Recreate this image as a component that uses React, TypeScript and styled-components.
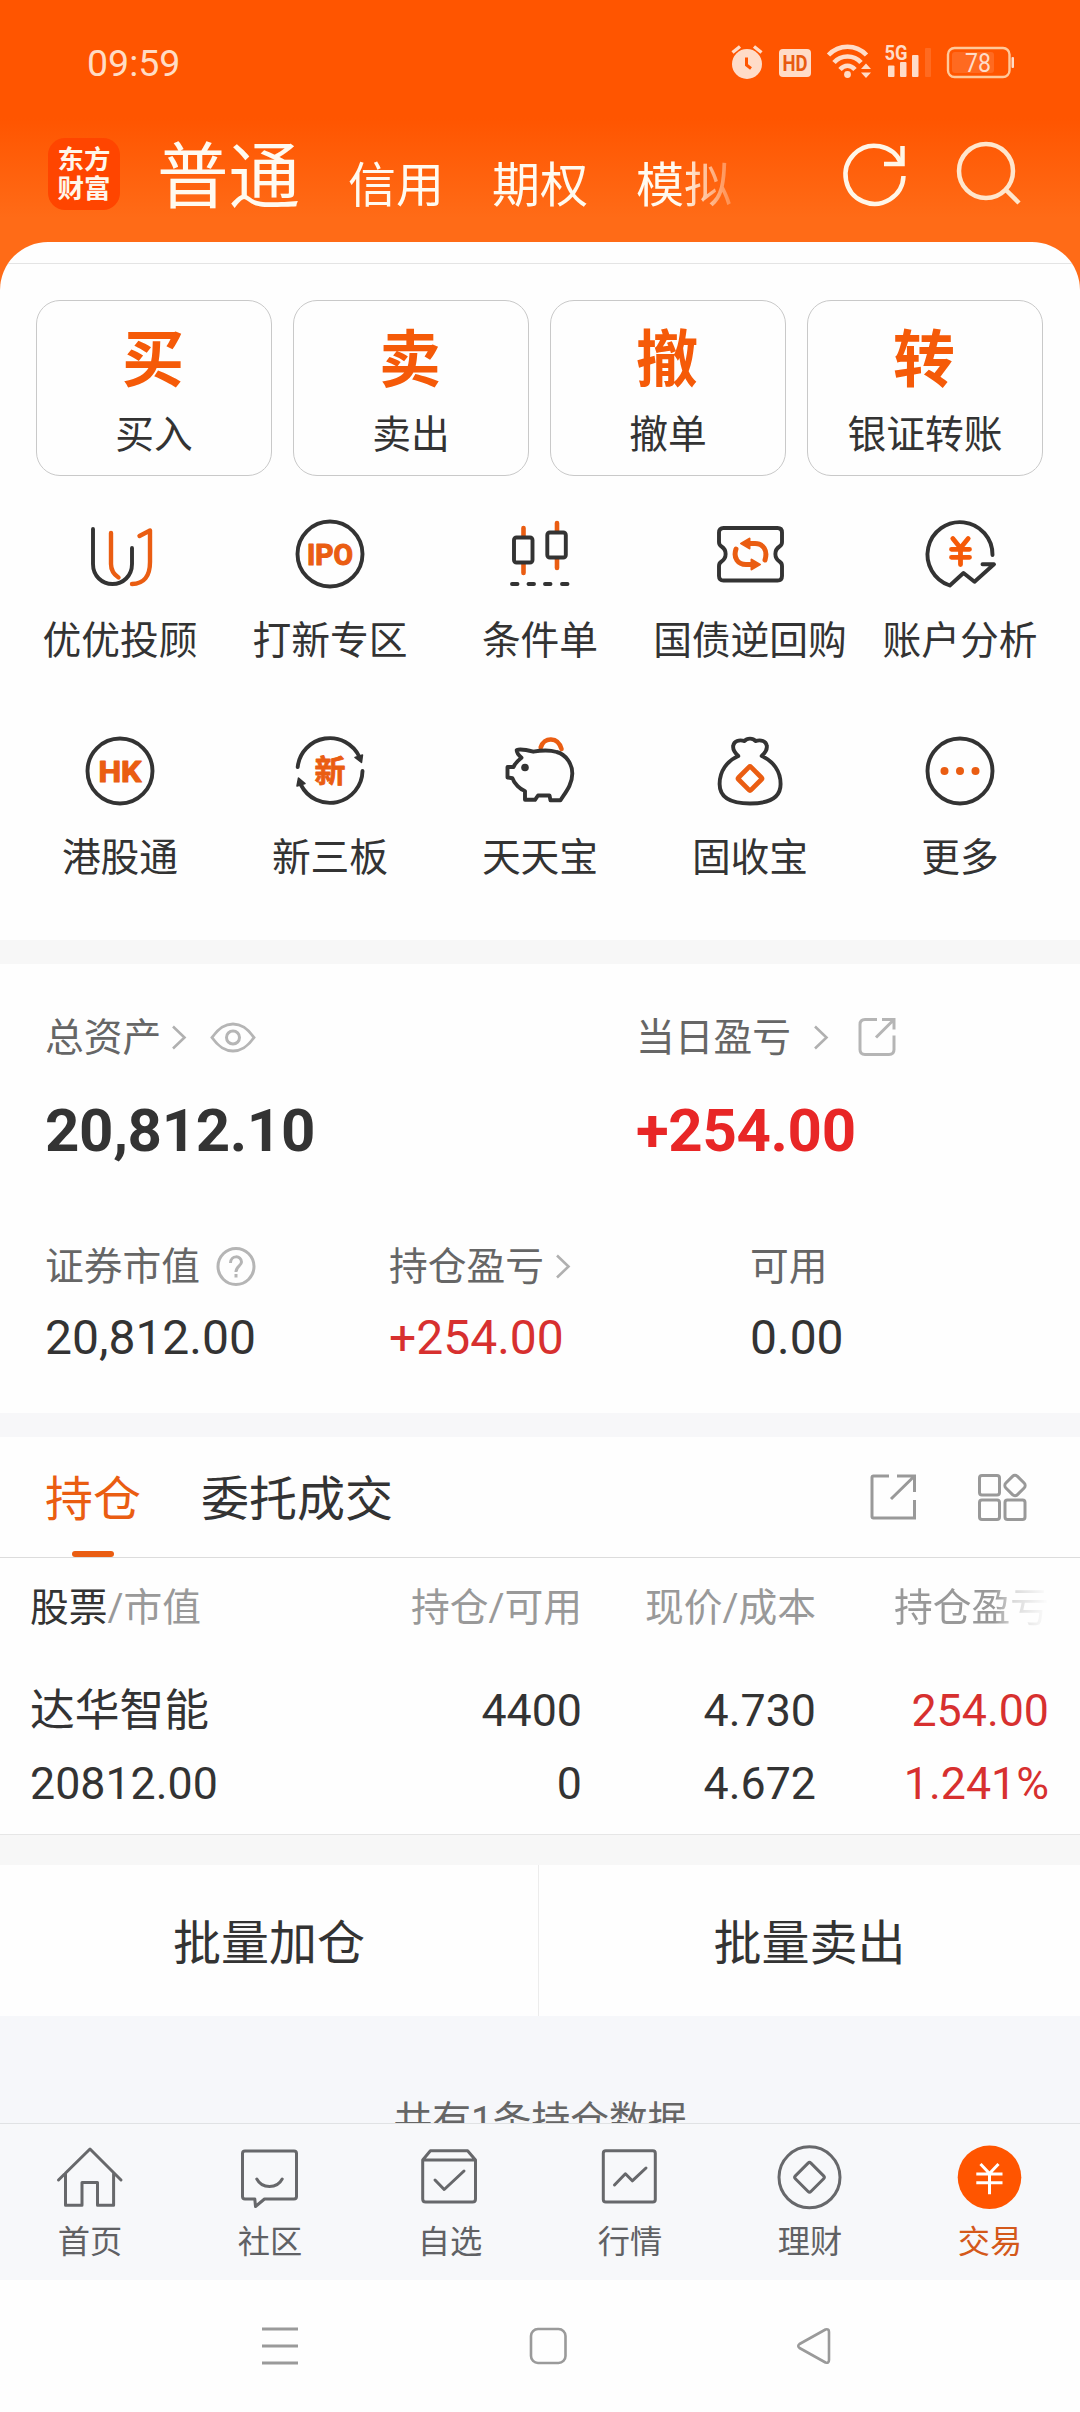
import React from "react";
import styled, { createGlobalStyle } from "styled-components";

const INK = "#333333";
const ORANGE = "#ea5d12";
const RED = "#d7302f";

const GlobalStyle = createGlobalStyle`
  * { box-sizing: border-box; }
  body {
    margin: 0;
    background: #fefefe;
    color: ${INK};
    font-family: Roboto, "Noto Sans CJK SC", sans-serif;
  }
  svg { display: block; flex: none; overflow: visible; }
`;

const Screen = styled.div`
  width: 1080px;
  height: 2412px;
  display: flex;
  flex-direction: column;
  overflow: hidden;
  background: #fefefe;
`;

/* ---------- header ---------- */

const Header = styled.header`
  height: 292px;
  flex: none;
  background: linear-gradient(#ff5500 0, #ff5500 118px, #ff6b17 218px, #ff6b17 100%);
`;

const StatusBar = styled.div`
  height: 124px;
  padding: 0 64px 0 87px;
  display: flex;
  align-items: center;
  justify-content: space-between;
`;

const Clock = styled.span`
  font-size: 37.5px;
  line-height: 44px;
  padding-top: 2px;
  color: #ffdcc4;
`;

const StatusIcons = styled.svg`
  width: 288px;
  height: 44px;
`;

const TitleBar = styled.div`
  height: 118px;
  display: flex;
  align-items: center;
  padding: 0 59px 18px 48px;
`;

const Logo = styled.div`
  width: 72px;
  height: 72px;
  border-radius: 17px;
  background: #ff4500;
  color: #fff6ea;
  font-size: 26.5px;
  font-weight: 700;
  line-height: 29px;
  text-align: center;
  padding-top: 7px;
`;

const AccountTabs = styled.nav`
  width: 612px;
  display: flex;
  align-items: baseline;
  padding: 16px 0 0 37px;
  gap: 48px;
  mask-image: linear-gradient(90deg, #000 0, #000 560px, transparent 630px);
`;

const AccountTab = styled.span<{ $active?: boolean }>`
  font-size: ${(p) => (p.$active ? 71.5 : 48)}px;
  line-height: 84px;
  white-space: nowrap;
  color: #fffaf0;
`;

const TitleActions = styled.div`
  margin-left: auto;
  display: flex;
  gap: 47px;
`;

/* ---------- sheet ---------- */

const Sheet = styled.main`
  margin-top: -50px;
  height: 1881px;
  flex: none;
  background: #fefefe;
  border-radius: 48px 48px 0 0;
  overflow: hidden;
  display: flex;
  flex-direction: column;
`;

const SheetTop = styled.div`
  height: 22px;
  flex: none;
  border-bottom: 1px solid #e4e4e4;
`;

const CardRow = styled.div`
  display: grid;
  grid-template-columns: repeat(4, 236px);
  gap: 21px;
  padding: 36px 36px 0;
  flex: none;
`;

const TradeCard = styled.div`
  height: 176px;
  border: 1px solid #c9c9c9;
  border-radius: 24px;
  display: flex;
  flex-direction: column;
  align-items: center;
  padding-top: 20px;
`;

const TradeGlyph = styled.span`
  font-size: 62px;
  font-weight: 700;
  line-height: 80px;
  padding-right: 2px;
  color: #f55a08;
`;

const TradeLabel = styled.span`
  font-size: 38.75px;
  line-height: 44px;
  margin-top: 12px;
`;

const ShortcutGrid = styled.div`
  height: 464px;
  flex: none;
  padding: 42px 15px 0;
  display: grid;
  grid-template-columns: repeat(5, 210px);
  grid-auto-rows: 217px;
`;

const Shortcut = styled.div`
  display: flex;
  flex-direction: column;
  align-items: center;
  gap: 27px;
  font-size: 38.75px;
  line-height: 48px;
  white-space: nowrap;
`;

const Band = styled.div<{ $h: number; $c?: string }>`
  height: ${(p) => p.$h}px;
  flex: none;
  background: ${(p) => p.$c || "#f7f7f7"};
`;

/* ---------- assets ---------- */

const Assets = styled.section`
  height: 449px;
  flex: none;
  padding: 48px 45px 0;
`;

const Summary = styled.div<{ $cols: string }>`
  display: grid;
  grid-template-columns: ${(p) => p.$cols};
`;

const FieldLabel = styled.div`
  height: 52px;
  display: flex;
  align-items: center;
  font-size: 38.75px;
  line-height: 52px;
  color: #666;
`;

const IconGap = styled.i<{ $w: number }>`
  width: ${(p) => p.$w}px;
  flex: none;
`;

const Total = styled.div<{ $c?: string }>`
  margin-top: 28px;
  font-size: 60px;
  font-weight: 700;
  line-height: 77px;
  height: 127px;
  letter-spacing: -0.35px;
  color: ${(p) => p.$c || INK};
`;

const Amount = styled.div<{ $c?: string }>`
  margin-top: 15px;
  font-size: 48px;
  line-height: 60px;
  color: ${(p) => p.$c || INK};
`;

/* ---------- positions ---------- */

const TabBar = styled.div`
  height: 121px;
  flex: none;
  padding: 0 53px 0 45px;
  display: flex;
  border-bottom: 1px solid #dcdcdc;
`;

const Tab = styled.div<{ $active?: boolean }>`
  display: flex;
  flex-direction: column;
  align-items: center;
  margin-right: 60px;
  padding-top: 31px;
  font-size: 48px;
  line-height: 64px;
  color: ${(p) => (p.$active ? ORANGE : INK)};
  &::after {
    content: "";
    width: 42px;
    height: 6px;
    margin-top: 19px;
    border-radius: 3px;
    background: ${(p) => (p.$active ? ORANGE : "transparent")};
  }
`;

const TabTools = styled.div`
  margin-left: auto;
  padding-top: 36px;
  display: flex;
  gap: 60px;
`;

const Table = styled.div`
  height: 277px;
  flex: none;
  padding: 22px 31px 0 30px;
  border-bottom: 1px solid #e6e6e6;
`;

const TableRow = styled.div<{ $head?: boolean; $h: number }>`
  display: grid;
  grid-template-columns: 291px 261px 234px 233px;
  height: ${(p) => p.$h}px;
  line-height: ${(p) => p.$h}px;
  font-size: ${(p) => (p.$head ? 38.75 : 44.75)}px;
  color: ${(p) => (p.$head ? "#999" : INK)};
  white-space: nowrap;
`;

const Cell = styled.div<{ $c?: string; $fade?: boolean }>`
  color: ${(p) => p.$c || "inherit"};
  text-align: right;
  &:first-child { text-align: left; }
  ${(p) =>
    p.$fade &&
    "mask-image: linear-gradient(90deg, #000 0, #000 178px, rgba(0,0,0,.35) 198px, transparent 233px);"}
`;

const Dark = styled.span`
  color: ${INK};
`;

const RowSpace = styled.div<{ $h: number }>`
  height: ${(p) => p.$h}px;
`;

const BatchRow = styled.div`
  height: 151px;
  flex: none;
  display: grid;
  grid-template-columns: 539px 541px;
`;

const BatchButton = styled.div`
  font-size: 48px;
  line-height: 157px;
  text-align: center;
  &:first-child { border-right: 1px solid #ececec; }
`;

const Footnote = styled.div`
  height: 107px;
  flex: none;
  padding-top: 81px;
  overflow: hidden;
  background: #f6f7fa;
  color: #666;
  text-align: center;
  font-size: 38.75px;
  line-height: 48px;
`;

/* ---------- bottom bars ---------- */

const NavBar = styled.nav`
  height: 157px;
  flex: none;
  border-top: 1px solid #e0e2e4;
  background: #f7f8fa;
  display: grid;
  grid-template-columns: repeat(6, 180px);
  padding-top: 17px;
`;

const NavItem = styled.div<{ $active?: boolean }>`
  display: flex;
  flex-direction: column;
  align-items: center;
  gap: 8px;
  font-size: 32.25px;
  line-height: 42px;
  color: ${(p) => (p.$active ? "#d4591a" : "#606164")};
`;

const SystemBar = styled.div`
  flex: 1;
  display: flex;
  align-items: flex-start;
  padding: 47px 0 0 261px;
  gap: 230px;
`;

/* ---------- drawings ---------- */

const Art: React.FC<{ children: React.ReactNode; sw?: number; color?: string }> = ({
  children,
  sw = 3.9,
  color = INK,
}) => (
  <svg
    width="72"
    height="72"
    viewBox="0 0 72 72"
    fill="none"
    stroke={color}
    strokeWidth={sw}
    strokeLinecap="round"
    strokeLinejoin="round"
  >
    {children}
  </svg>
);

const Word: React.FC<{ children: string; y: number; size: number; w: number; stroke?: number }> = ({
  children,
  y,
  size,
  w,
  stroke = 1.2,
}) => (
  <text
    x={36}
    y={y}
    fontSize={size}
    fontWeight={700}
    textAnchor="middle"
    textLength={w}
    lengthAdjust="spacingAndGlyphs"
    fill={ORANGE}
    stroke={ORANGE}
    strokeWidth={stroke}
  >
    {children}
  </text>
);

const shortcuts: { label: string; art: React.ReactNode }[] = [
  {
    label: "优优投顾",
    art: (
      <Art>
        <path d="M9 11V46C9 58 18 66 28.500 66S48 58 48 46V30" />
        <path stroke={ORANGE} strokeWidth="4.400" d="M27 15V46C27 52 30 56.500 34.500 59.500M55.500 18L66 12.500V44C66 58 60 66 48 66" />
      </Art>
    ),
  },
  {
    label: "打新专区",
    art: (
      <Art>
        <circle cx="36" cy="36" r="32.500" />
        <Word y={46.5} size={29.5} w={46}>IPO</Word>
      </Art>
    ),
  },
  {
    label: "条件单",
    art: (
      <Art>
        <path stroke={ORANGE} strokeWidth="4.600" d="M19.500 10V18M19.500 46V55M53 5V13M53 41V50" />
        <rect x="10" y="19.500" width="18.500" height="25" rx="2.500" />
        <rect x="43.300" y="14.500" width="18.500" height="25" rx="2.500" />
        <path d="M8 66H13.500M24.500 66H30M41 66H46.500M58 66H63.500" />
      </Art>
    ),
  },
  {
    label: "国债逆回购",
    art: (
      <Art>
        <path d="M9.500 10H63.500Q68 10 68 14.500V24Q68 27 65.500 28.500C60 32 60 40 65.500 43.500Q68 45 68 48V58Q68 62.500 63.500 62.500H9.500Q5 62.500 5 58V48Q5 45 7.500 43.500C13 40 13 32 7.500 28.500Q5 27 5 24V14.500Q5 10 9.500 10Z" />
        <g stroke={ORANGE} strokeWidth="5">
          <path d="M34 25.500H41C49 25.500 54 32 51 42M22 31C19 40 24 46.500 32 46.500H38" />
          <path strokeWidth="2" fill={ORANGE} d="M27 25.500L35.500 20.500V30.500ZM46 46.500L37.500 41.500V51.500Z" />
        </g>
      </Art>
    ),
  },
  {
    label: "账户分析",
    art: (
      <Art>
        <path d="M68.500 37A32.500 32.500 0 1 0 25.800 67.500L39.500 55L50.500 63.700L70 46.300H58.500" />
        <path stroke="#f55a08" strokeWidth="4.800" d="M28.800 20.500L36.500 30L44.200 20.500M27.500 31.300H45.500M27.500 39.300H45.500M36.500 31V46.500" />
      </Art>
    ),
  },
  {
    label: "港股通",
    art: (
      <Art>
        <circle cx="36" cy="36" r="32.500" />
        <Word y={46.5} size={29.5} w={43}>HK</Word>
      </Art>
    ),
  },
  {
    label: "新三板",
    art: (
      <Art>
        <path d="M3.700 32A32.500 32.500 0 0 1 65.500 22M68.500 36A32.500 32.500 0 0 1 7 50" />
        <path fill={INK} strokeWidth="1.500" d="M61 22.500L68.500 20L67.500 27.500ZM4.500 43L3 51L11 48.500Z" />
        <Word y={47} size={31} w={31} stroke={0.8}>新</Word>
      </Art>
    ),
  },
  {
    label: "天天宝",
    art: (
      <Art>
        <path stroke={ORANGE} strokeWidth="4.600" d="M36.700 12.500C40 1.500 54 1.500 57.500 14" />
        <path d="M12.700 15C17 13.500 23 15 29.300 16.700C36 15.500 46 15 52.700 17C62 19.500 68.300 29 68.300 38.500C68.300 50 61 58 56.500 65.300H46.500L45.500 60.500H34L31 64.800H21V56C16 54.500 10.500 49 8.500 43.300L3.500 42.500V32H9.500C11 28 14 25.500 17.500 22.700C15 20.500 12.500 18 12.700 15Z" />
        <circle cx="21" cy="32.500" r="3.800" fill={INK} stroke="none" />
      </Art>
    ),
  },
  {
    label: "固收宝",
    art: (
      <Art>
        <path d="M24.300 21C20 17 18.500 14 19.300 10.500C20 6 25 4.500 30.500 6C33 2.800 39 2.800 41.500 6C47 4.500 52 6 52.700 10.500C53.500 14 52 17 47.700 21C59 26 66.600 36 66.600 49C66.600 62 56 68.500 36 68.500S5.600 62 5.600 49C5.600 36 13 26 24.300 21Z" />
        <rect x="27.200" y="34.700" width="17.600" height="17.600" rx="1.500" transform="rotate(45 36 43.500)" stroke={ORANGE} strokeWidth="4.800" />
      </Art>
    ),
  },
  {
    label: "更多",
    art: (
      <Art>
        <circle cx="36" cy="36" r="32.500" />
        <g fill={ORANGE} stroke="none">
          <circle cx="20.500" cy="36" r="4" />
          <circle cx="36" cy="36" r="4" />
          <circle cx="51.500" cy="36" r="4" />
        </g>
      </Art>
    ),
  },
];

const navItems: { label: string; active?: boolean; art: React.ReactNode }[] = [
  {
    label: "首页",
    art: <path d="M4.500 39L36 8L67 39M11.500 32V64.300H28V41.500H43.500V64.300H59.600V32" />,
  },
  {
    label: "社区",
    art: (
      <path d="M11 10H60Q62.500 10 62.500 12.500V55.500Q62.500 58 60 58H30.500L21.500 65.500L20.800 58H11Q8.500 58 8.500 55.500V12.500Q8.500 10 11 10M22.800 38C28 48 43 48 48.200 38" />
    ),
  },
  {
    label: "自选",
    art: <path d="M8.700 19H61.500V58Q61.500 61 58.500 61H11.700Q8.700 61 8.700 58V19L16.400 9.700H53.600L61.500 19M21 39L30.200 48.500L50 30" />,
  },
  {
    label: "行情",
    art: (
      <>
        <rect x="9.300" y="9.700" width="52" height="51.300" rx="2.500" />
        <path d="M20.500 44L31.400 32.800L38.300 39.800L52 27" />
      </>
    ),
  },
  {
    label: "理财",
    art: (
      <>
        <circle cx="35.500" cy="36.300" r="30.500" />
        <rect x="24.500" y="25.300" width="22" height="22" rx="2" transform="rotate(45 35.500 36.300)" />
      </>
    ),
  },
  {
    label: "交易",
    active: true,
    art: (
      <>
        <circle cx="35.500" cy="36.300" r="31.800" fill="#ff5500" stroke="none" />
        <path stroke="#fff" strokeLinecap="butt" d="M26.500 23L35.500 32.500L44.500 23M22.300 33H48.500M22.300 41.700H48.500M35.500 32.500V53.300" />
      </>
    ),
  },
];

const Chevron: React.FC = () => (
  <svg width="16" height="24" viewBox="0 0 16 24" fill="none" stroke="#b0b0b0" strokeWidth="2.600">
    <path d="M2 0.500L13.500 11.500L2 22.500" />
  </svg>
);

export default function App() {
  return (
    <Screen>
      <GlobalStyle />
      <Header>
        <StatusBar>
          <Clock>09:59</Clock>
          <StatusIcons viewBox="728 40 288 44" fill="#ffdcc8">
            <circle cx="747" cy="64" r="15" />
            <path d="M732.500 52.500L740 46.500M754 46.500L761.500 52.500" stroke="#ffdcc8" strokeWidth="3.400" />
            <path d="M746.500 57.500V65L751 68.500" stroke="#ff5500" strokeWidth="3" fill="none" />
            <rect x="779" y="49" width="32" height="28" rx="4" />
            <text x="795" y="71" fontSize="22" fontWeight="700" textAnchor="middle" textLength="25" lengthAdjust="spacingAndGlyphs" fill="#e85a10">HD</text>
            <g fill="none" stroke="#ffdcc8" strokeWidth="4.600">
              <path d="M828.500 55C839 44 856 44 866.500 55" />
              <path d="M834 62.500C841 54.500 854 54.500 861 62.500" />
              <path d="M840 69.500C844.500 64.500 850.500 64.500 855 69.500" />
            </g>
            <circle cx="847.500" cy="74.500" r="3.400" />
            <path d="M861 69L866 63.500L871 69ZM861 72.500L866 78L871 72.500Z" />
            <text x="884.500" y="60" fontSize="20" fontWeight="700" textLength="23" lengthAdjust="spacingAndGlyphs">5G</text>
            <rect x="888" y="65.500" width="6.500" height="11.500" rx="1" />
            <rect x="900" y="62" width="6.500" height="15" rx="1" />
            <rect x="912" y="55" width="6.500" height="22" rx="1" />
            <rect x="925" y="48" width="6" height="29" rx="1" opacity=".16" />
            <rect x="952" y="52" width="42" height="21" rx="3" opacity=".16" />
            <rect x="948" y="48" width="61.500" height="29" rx="6.500" fill="none" stroke="#ffc99a" strokeWidth="2.400" />
            <rect x="1011.500" y="57" width="2.500" height="11" rx="1" />
            <text x="978" y="72" fontSize="25" fontWeight="400" textAnchor="middle" textLength="26" lengthAdjust="spacingAndGlyphs">78</text>
          </StatusIcons>
        </StatusBar>
        <TitleBar>
          <Logo>
            东方
            <br />
            财富
          </Logo>
          <AccountTabs>
            <AccountTab $active>普通</AccountTab>
            <AccountTab>信用</AccountTab>
            <AccountTab>期权</AccountTab>
            <AccountTab>模拟</AccountTab>
          </AccountTabs>
          <TitleActions>
            <svg width="66" height="66" viewBox="843 141 66 66" fill="none" stroke="#fff6e8" strokeWidth="4.500">
              <path d="M904.500 176A29 29 0 1 1 902 163" />
              <path d="M903.500 146V164H885" />
            </svg>
            <svg width="66" height="66" viewBox="956 141 66 66" fill="none" stroke="#ffe6cc" strokeWidth="4.500">
              <circle cx="987" cy="171" r="27" />
              <path d="M1006 189L1020 203" />
            </svg>
          </TitleActions>
        </TitleBar>
      </Header>

      <Sheet>
        <SheetTop />
        <CardRow>
          {[
            ["买", "买入"],
            ["卖", "卖出"],
            ["撤", "撤单"],
            ["转", "银证转账"],
          ].map(([glyph, label]) => (
            <TradeCard key={label}>
              <TradeGlyph>{glyph}</TradeGlyph>
              <TradeLabel>{label}</TradeLabel>
            </TradeCard>
          ))}
        </CardRow>
        <ShortcutGrid>
          {shortcuts.map((s) => (
            <Shortcut key={s.label}>
              {s.art}
              <span>{s.label}</span>
            </Shortcut>
          ))}
        </ShortcutGrid>
        <Band $h={24} />

        <Assets>
          <Summary $cols="591px 1fr">
            <div>
              <FieldLabel>
                总资产
                <IconGap $w={10} />
                <Chevron />
                <IconGap $w={23} />
                <svg width="46" height="32" viewBox="0 0 46 32" fill="none" stroke="#b5b5b5" strokeWidth="3">
                  <path d="M2 15.500C9 5.500 15 2 23 2S37 5.500 44 15.500C37 25.500 31 29 23 29S9 25.500 2 15.500Z" />
                  <circle cx="23" cy="15.500" r="6.500" />
                </svg>
              </FieldLabel>
              <Total>20,812.10</Total>
            </div>
            <div>
              <FieldLabel>
                当日盈亏
                <IconGap $w={22} />
                <Chevron />
                <IconGap $w={28} />
                <svg width="40" height="40" viewBox="0 1.500 40 40" fill="none" stroke="#b5b5b5" strokeWidth="3">
                  <path d="M20 3H8Q3 3 3 8V33Q3 38 8 38H32Q37 38 37 33V19M25 3H37V13M37 3L19 21" />
                </svg>
              </FieldLabel>
              <Total $c="#e82626">+254.00</Total>
            </div>
          </Summary>
          <RowSpace $h={22} />
          <Summary $cols="344px 361px 1fr">
            <div>
              <FieldLabel>
                证券市值
                <IconGap $w={16} />
                <svg width="40" height="40" viewBox="0 0.500 40 40" fill="none" stroke="#b5b5b5" strokeWidth="3">
                  <circle cx="20" cy="20" r="18" />
                  <path d="M14.500 16.500C14.500 8.500 25.500 8.500 25.500 15.500C25.500 19.500 20 19.500 20 25.500M20 27.500V31" />
                </svg>
              </FieldLabel>
              <Amount>20,812.00</Amount>
            </div>
            <div>
              <FieldLabel>
                持仓盈亏
                <IconGap $w={11} />
                <Chevron />
              </FieldLabel>
              <Amount $c={RED}>+254.00</Amount>
            </div>
            <div>
              <FieldLabel>可用</FieldLabel>
              <Amount>0.00</Amount>
            </div>
          </Summary>
        </Assets>
        <Band $h={24} $c="#f7f7f9" />

        <TabBar>
          <Tab $active>持仓</Tab>
          <Tab>委托成交</Tab>
          <TabTools>
            <svg width="48" height="48" viewBox="0 0 48 48" fill="none" stroke="#999" strokeWidth="3">
              <path d="M20 3H4.500Q3 3 3 4.500V43.500Q3 45 4.500 45H45.500V27M28 3H45.500V19M45.500 3L22 26" />
            </svg>
            <svg width="50" height="50" viewBox="0 0 50 50" fill="none" stroke="#999" strokeWidth="3">
              <rect x="2.500" y="2.500" width="20" height="19.500" rx="2.500" />
              <rect x="2.500" y="27" width="20" height="19.500" rx="2.500" />
              <rect x="28" y="27" width="20" height="19.500" rx="2.500" />
              <rect x="29.800" y="4.300" width="16.400" height="16.400" rx="3.500" transform="rotate(45 38 12.500)" />
            </svg>
          </TabTools>
        </TabBar>
        <Table>
          <TableRow $head $h={56}>
            <Cell>
              <Dark>股票</Dark>/市值
            </Cell>
            <Cell>持仓/可用</Cell>
            <Cell>现价/成本</Cell>
            <Cell $fade>持仓盈亏</Cell>
          </TableRow>
          <RowSpace $h={38} />
          <TableRow $h={73}>
            <Cell>达华智能</Cell>
            <Cell>4400</Cell>
            <Cell>4.730</Cell>
            <Cell $c={RED}>254.00</Cell>
          </TableRow>
          <TableRow $h={73}>
            <Cell>20812.00</Cell>
            <Cell>0</Cell>
            <Cell>4.672</Cell>
            <Cell $c={RED}>1.241%</Cell>
          </TableRow>
        </Table>
        <Band $h={30} />
        <BatchRow>
          <BatchButton>批量加仓</BatchButton>
          <BatchButton>批量卖出</BatchButton>
        </BatchRow>
        <Footnote>共有1条持仓数据</Footnote>
      </Sheet>

      <NavBar>
        {navItems.map((n) => (
          <NavItem key={n.label} $active={n.active}>
            <Art sw={3} color="#67686b">
              {n.art}
            </Art>
            <span>{n.label}</span>
          </NavItem>
        ))}
      </NavBar>
      <SystemBar>
        <svg width="38" height="38" viewBox="0 0 38 38" fill="none" stroke="#9a9a9a" strokeWidth="3">
          <path d="M1 2H37M1 19H37M1 36H37" />
        </svg>
        <svg width="38" height="38" viewBox="0 0 38 38" fill="none" stroke="#9a9a9a" strokeWidth="2.600">
          <rect x="2" y="2" width="34.500" height="34" rx="7" />
        </svg>
        <svg width="38" height="38" viewBox="0 0 38 38" fill="none" stroke="#9a9a9a" strokeWidth="2.600" strokeLinejoin="round">
          <path d="M2.500 17L28.500 2.500Q32 1.500 32 5V33Q32 36.500 28.500 35.500L2.500 21Q0 19 2.500 17Z" />
        </svg>
      </SystemBar>
    </Screen>
  );
}
